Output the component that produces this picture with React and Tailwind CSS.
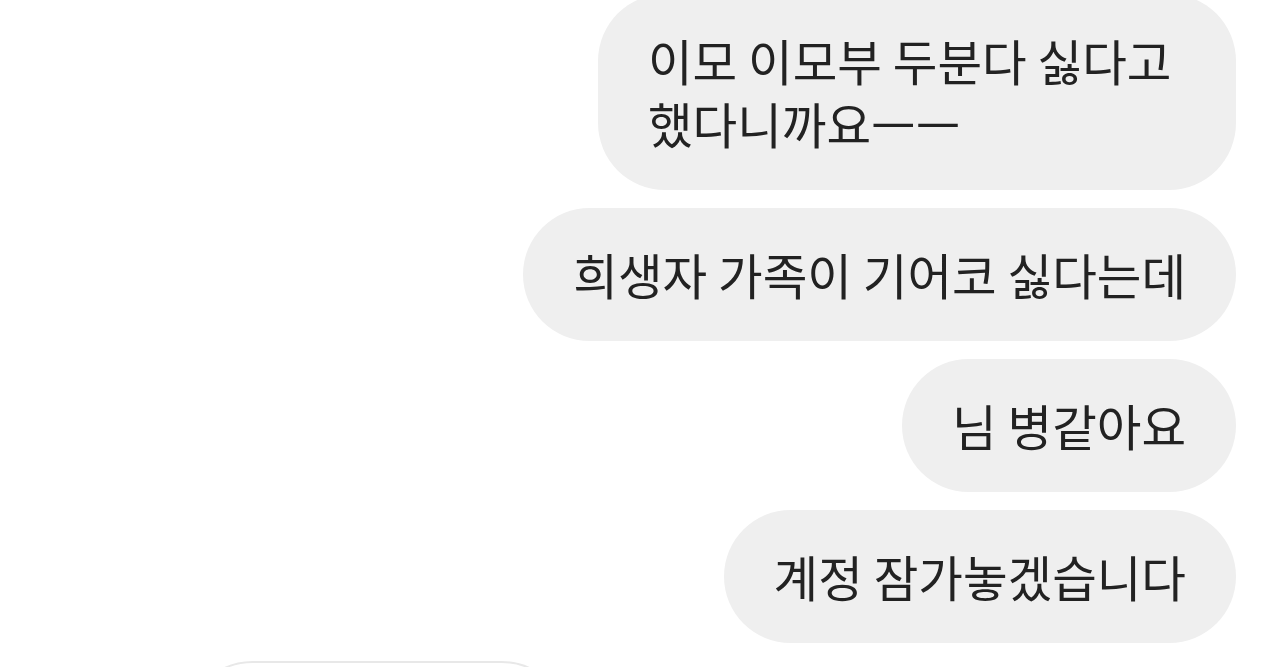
const messages = [
  { id: 1, lines: ["이모 이모부 두분다 싫다고", "했다니까요ㅡㅡ"], wide: true },
  { id: 2, lines: ["희생자 가족이 기어코 싫다는데"] },
  { id: 3, lines: ["님 병같아요"] },
  { id: 4, lines: ["계정 잠가놓겠습니다"] },
];

function SentBubble({ lines, wide }) {
  return (
    <div
      className={
        "rounded-[67px] bg-[#efefef] px-[50px] py-[35px] text-[48.5px] leading-[63px] text-[#222222] whitespace-nowrap " +
        (wide ? "w-[638px]" : "w-fit")
      }
    >
      {lines.map((line, i) => (
        <div key={i}>{line}</div>
      ))}
    </div>
  );
}

export default function App() {
  return (
    <div
      className="h-[667px] overflow-hidden bg-white"
      style={{ fontFamily: '"Noto Sans CJK KR", "Noto Sans", sans-serif' }}
    >
      <div className="-mt-[6px] flex flex-col items-end gap-[18px] pr-[44px]">
        {messages.map((m) => (
          <SentBubble key={m.id} lines={m.lines} wide={m.wide} />
        ))}

        {/* next incoming message, only its top edge shows */}
        <div className="ml-[186px] h-[133px] w-[382px] self-start rounded-[67px] border-2 border-[#e8e8e8] bg-white" />
      </div>
    </div>
  );
}
